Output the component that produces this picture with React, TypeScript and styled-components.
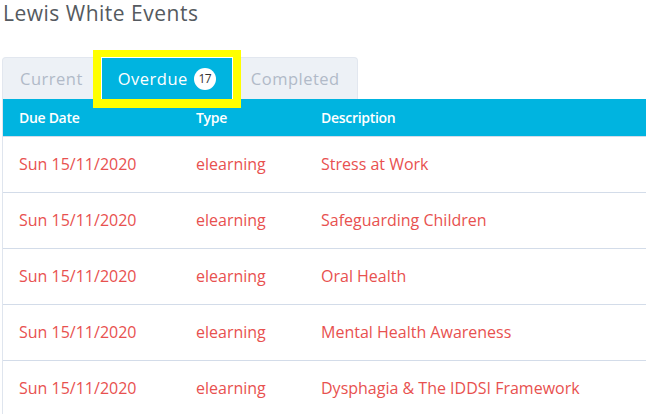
import React from "react";
import styled, { createGlobalStyle } from "styled-components";

const Global = createGlobalStyle`
  html, body { margin: 0; padding: 0; background: #ffffff; }
  body { font-family: "Open Sans", "Liberation Sans", sans-serif; }
`;

const Page = styled.div`
  width: 646px;
  height: 414px;
  overflow: hidden;
  padding-left: 2px;
  box-sizing: border-box;
`;

const Title = styled.h1`
  margin: 0;
  padding: 0 0 0 1px;
  font-family: "Open Sans", sans-serif;
  font-weight: 400;
  font-size: 21px;
  line-height: 26px;
  color: #555a60;
  letter-spacing: 0.5px;
`;

const TabList = styled.div`
  display: flex;
  margin-top: 31px;
  height: 42px;
  align-items: stretch;
`;

const Tab = styled.div<{ $active?: boolean; $first?: boolean; $last?: boolean }>`
  position: relative;
  display: flex;
  align-items: center;
  gap: 6px;
  padding: 0 ${(p) => (p.$active ? "16px" : "17px")};
  box-sizing: border-box;
  font-family: "Open Sans", sans-serif;
  font-size: 16.5px;
  letter-spacing: 0.5px;
  color: ${(p) => (p.$active ? "#ffffff" : "#b1bac8")};
  background: ${(p) => (p.$active ? "#00b4e0" : "#edf1f6")};
  border: 1px solid ${(p) => (p.$active ? "#ffffff" : "#e2e7ef")};
  border-bottom: none;
  border-radius: ${(p) => (p.$first ? "4px 0 0 0" : p.$last ? "0 4px 0 0" : "0")};
`;

const Badge = styled.span`
  display: inline-flex;
  align-items: center;
  justify-content: center;
  width: 22px;
  height: 22px;
  border-radius: 50%;
  background: #ffffff;
  color: #333;
  font-size: 12px;
  letter-spacing: -0.5px;
`;

const Highlight = styled.div`
  position: absolute;
  inset: -8px -9px -9px -9px;
  border: 7px solid #ffff00;
  border-left-width: 8px;
  border-right-width: 8px;
  border-bottom-width: 9px;
  pointer-events: none;
  z-index: 2;
`;

const Table = styled.div`
  display: flex;
  flex-direction: column;
  border-left: 1px solid #dfe5ee;
`;

const Row = styled.div<{ $head?: boolean }>`
  display: grid;
  grid-template-columns: 177px 125px 1fr;
  align-items: center;
  padding: 0 0 ${(p) => (p.$head ? "0" : "2px")} 16px;
  box-sizing: border-box;
  height: ${(p) => (p.$head ? "38px" : "56px")};
  background: ${(p) => (p.$head ? "#00b4e0" : "#ffffff")};
  border-bottom: 1px solid #d3dce9;
  font-family: "Open Sans", sans-serif;
  font-size: ${(p) => (p.$head ? "14px" : "16px")};
  font-weight: ${(p) => (p.$head ? 600 : 400)};
  color: ${(p) => (p.$head ? "#ffffff" : "#e8514f")};
  letter-spacing: ${(p) => (p.$head ? "-0.3px" : "0px")};
  white-space: nowrap;
`;

const rows = [
  "Stress at Work",
  "Safeguarding Children",
  "Oral Health",
  "Mental Health Awareness",
  "Dysphagia & The IDDSI Framework",
];

export default function App() {
  return (
    <Page>
      <Global />
      <Title>Lewis White Events</Title>
      <TabList>
        <Tab $first>Current</Tab>
        <Tab $active>
          Overdue <Badge>17</Badge>
          <Highlight />
        </Tab>
        <Tab $last>Completed</Tab>
      </TabList>
      <Table>
        <Row $head>
          <span>Due Date</span>
          <span>Type</span>
          <span>Description</span>
        </Row>
        {rows.map((d) => (
          <Row key={d}>
            <span>Sun 15/11/2020</span>
            <span>elearning</span>
            <span>{d}</span>
          </Row>
        ))}
      </Table>
    </Page>
  );
}
